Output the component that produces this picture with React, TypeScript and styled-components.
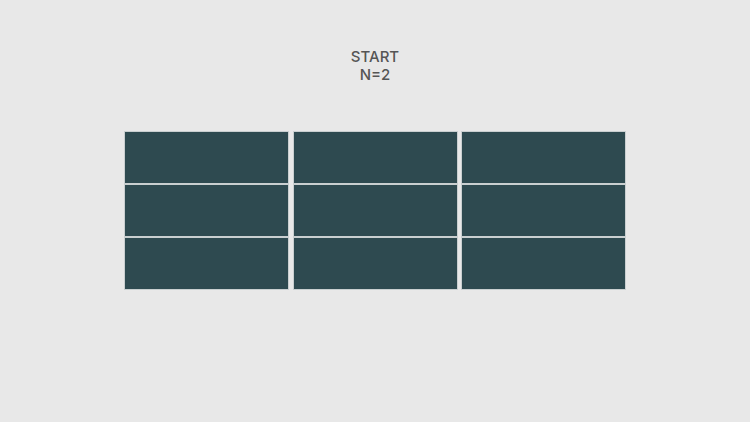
import React from "react";
import styled, { createGlobalStyle } from "styled-components";

const Global = createGlobalStyle`
  html, body { margin: 0; padding: 0; background: #e8e8e8; }
  body { font-family: Inter, "Liberation Sans", sans-serif; }
`;

const Page = styled.div`
  width: 750px;
  height: 422px;
  display: flex;
  flex-direction: column;
  align-items: center;
`;

const Title = styled.div`
  margin-top: 48px;
  text-align: center;
  color: #555555;
  font-size: 15px;
  font-weight: 500;
  line-height: 18px;
`;

const Grid = styled.div`
  margin-top: 48px;
  display: grid;
  grid-template-columns: repeat(3, 163px);
  grid-auto-rows: 51px;
  column-gap: 5.5px;
  row-gap: 2px;
`;

const Cell = styled.div`
  background: #2e4a50;
  box-shadow: 0 0 0 1px #c9cfd0;
`;

export default function App() {
  const cells = Array.from({ length: 9 });
  return (
    <>
      <Global />
      <Page>
        <Title>
          START
          <br />
          N=2
        </Title>
        <Grid>
          {cells.map((_, i) => (
            <Cell key={i} />
          ))}
        </Grid>
      </Page>
    </>
  );
}
